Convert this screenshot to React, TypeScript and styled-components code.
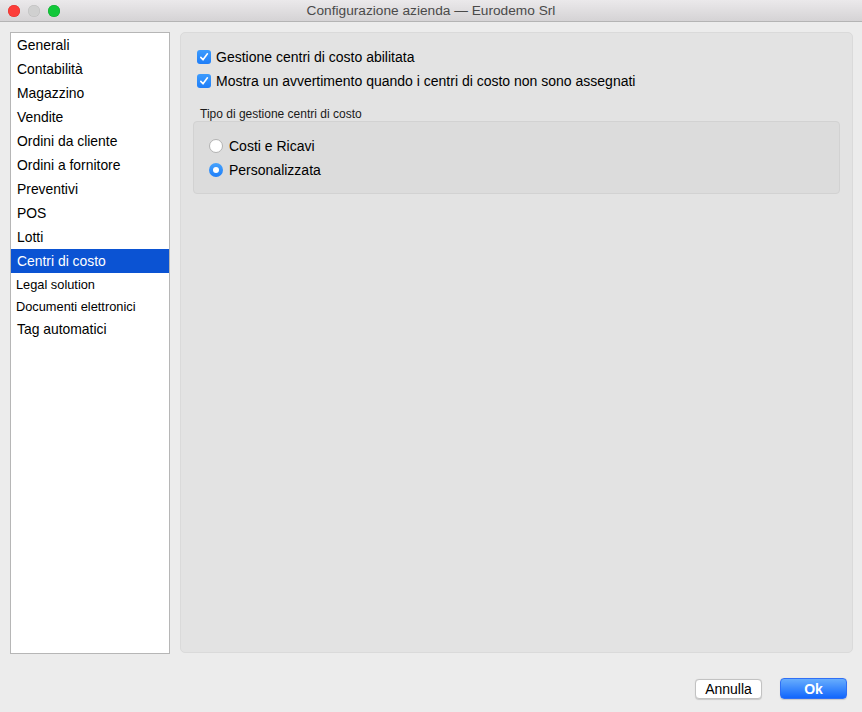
import React from "react";
import styled, { createGlobalStyle } from "styled-components";

const Global = createGlobalStyle`
  *, *::before, *::after { box-sizing: border-box; }
  html, body { margin: 0; padding: 0; }
  body { font-family: "Liberation Sans", Arial, sans-serif; background: #ececec; }
`;

const Window = styled.div`
  width: 862px;
  height: 712px;
  background: #ececec;
  display: flex;
  flex-direction: column;
  overflow: hidden;
`;

const TitleBar = styled.div`
  height: 22px;
  flex: none;
  border-bottom: 1px solid #b4b4b4;
  background: linear-gradient(#ebe9eb, #d5d3d5);
  position: relative;
  display: flex;
  align-items: center;
  justify-content: center;
  font-size: 13.7px;
  color: #4a4a4a;
`;

const Lights = styled.div`
  position: absolute;
  left: 8px;
  top: 5px;
  display: flex;
  gap: 8px;
`;

const Light = styled.span<{ $c: string; $b: string }>`
  width: 12px;
  height: 12px;
  border-radius: 50%;
  background: ${(p) => p.$c};
  box-shadow: inset 0 0 0 0.5px ${(p) => p.$b};
`;

const Main = styled.div`
  display: flex;
  align-items: flex-start;
  gap: 10px;
  padding: 10px 9px 0 10px;
  height: 632px;
  flex: none;
`;

const Sidebar = styled.div`
  width: 160px;
  height: 622px;
  flex: none;
  background: #fff;
  border: 1px solid #b6b6b6;
  padding-top: 0;
`;

const Item = styled.div<{ $small?: boolean; $sel?: boolean }>`
  height: ${(p) => (p.$small ? 22 : 24)}px;
  line-height: ${(p) => (p.$small ? 22 : 24)}px;
  padding-left: ${(p) => (p.$small ? 5 : 6)}px;
  padding-top: ${(p) => (p.$small ? 1 : 0)}px;
  font-size: ${(p) => (p.$small ? 12.8 : 13.9)}px;
  color: ${(p) => (p.$sel ? "#fff" : "#000")};
  background: ${(p) => (p.$sel ? "#0b53d3" : "transparent")};
  white-space: nowrap;
`;

const Panel = styled.div`
  flex: 1;
  height: 621px;
  background: #e3e3e3;
  border: 1px solid #dadada;
  border-radius: 5px;
  padding: 12px 12px 0 16px;
  display: flex;
  flex-direction: column;
`;

const CheckRow = styled.label`
  display: flex;
  align-items: center;
  gap: 5px;
  height: 24px;
  font-size: 14px;
  color: #000;
`;

const Check = styled.span`
  width: 14px;
  height: 14px;
  border-radius: 3px;
  background: linear-gradient(#3c9bfd, #1f7ef8);
  display: flex;
  align-items: center;
  justify-content: center;
`;

const GroupTitle = styled.div`
  font-size: 12px;
  color: #1a1a1a;
  margin: 15px 0 0 3px;
  height: 13px;
  line-height: 12px;
`;

const Group = styled.div`
  margin-left: -4px;
  height: 73px;
  background: #dcdcdc;
  border: 1px solid #d2d2d2;
  border-radius: 4px;
  padding: 12px 0 0 15px;
`;

const RadioRow = styled.label`
  display: flex;
  align-items: center;
  gap: 6px;
  height: 24px;
  font-size: 14px;
  color: #000;
`;

const Radio = styled.span<{ $on?: boolean }>`
  width: 14px;
  height: 14px;
  border-radius: 50%;
  background: ${(p) => (p.$on ? "linear-gradient(#47a3fd, #1e7ef8)" : "#fff")};
  border: ${(p) => (p.$on ? "none" : "1px solid #b2b2b2")};
  display: flex;
  align-items: center;
  justify-content: center;
  &::after {
    content: "";
    display: ${(p) => (p.$on ? "block" : "none")};
    width: 6px;
    height: 6px;
    border-radius: 50%;
    background: #fff;
  }
`;

const Footer = styled.div`
  display: flex;
  justify-content: flex-end;
  align-items: flex-start;
  gap: 18px;
  padding: 24px 15px 0 0;
`;

const Button = styled.button<{ $primary?: boolean }>`
  font-family: "Liberation Sans", Arial, sans-serif;
  font-size: 14px;
  height: ${(p) => (p.$primary ? 21 : 20)}px;
  width: 67px;
  margin-top: ${(p) => (p.$primary ? 0 : 1)}px;
  padding: 0;
  border-radius: 4px;
  border: 1px solid ${(p) => (p.$primary ? "#2f6ff5" : "#c2c2c2")};
  background: ${(p) => (p.$primary ? "linear-gradient(#67adfd, #1166fd)" : "#fff")};
  color: ${(p) => (p.$primary ? "#fff" : "#000")};
  font-weight: ${(p) => (p.$primary ? 700 : 400)};
  box-shadow: 0 0.5px 1px rgba(0,0,0,0.15);
`;

const items: { t: string; small?: boolean }[] = [
  { t: "Generali" },
  { t: "Contabilità" },
  { t: "Magazzino" },
  { t: "Vendite" },
  { t: "Ordini da cliente" },
  { t: "Ordini a fornitore" },
  { t: "Preventivi" },
  { t: "POS" },
  { t: "Lotti" },
  { t: "Centri di costo" },
  { t: "Legal solution", small: true },
  { t: "Documenti elettronici", small: true },
  { t: "Tag automatici" },
];

const Tick = () => (
  <svg width="10" height="10" viewBox="0 0 10 10">
    <path d="M1.8 5.4 L4 7.8 L8.4 1.8" fill="none" stroke="#fff" strokeWidth="1.6" strokeLinecap="round" strokeLinejoin="round" />
  </svg>
);

export default function App() {
  return (
    <Window>
      <Global />
      <TitleBar>
        <Lights>
          <Light $c="#fc3d39" $b="#e0302c" />
          <Light $c="#d0d0d0" $b="#bdbdbd" />
          <Light $c="#12c83a" $b="#0ea92f" />
        </Lights>
        Configurazione azienda — Eurodemo Srl
      </TitleBar>
      <Main>
        <Sidebar>
          {items.map((it) => (
            <Item key={it.t} $small={it.small} $sel={it.t === "Centri di costo"}>
              {it.t}
            </Item>
          ))}
        </Sidebar>
        <Panel>
          <CheckRow>
            <Check><Tick /></Check>
            Gestione centri di costo abilitata
          </CheckRow>
          <CheckRow>
            <Check><Tick /></Check>
            Mostra un avvertimento quando i centri di costo non sono assegnati
          </CheckRow>
          <GroupTitle>Tipo di gestione centri di costo</GroupTitle>
          <Group>
            <RadioRow>
              <Radio />
              Costi e Ricavi
            </RadioRow>
            <RadioRow>
              <Radio $on />
              Personalizzata
            </RadioRow>
          </Group>
        </Panel>
      </Main>
      <Footer>
        <Button>Annulla</Button>
        <Button $primary>Ok</Button>
      </Footer>
    </Window>
  );
}
